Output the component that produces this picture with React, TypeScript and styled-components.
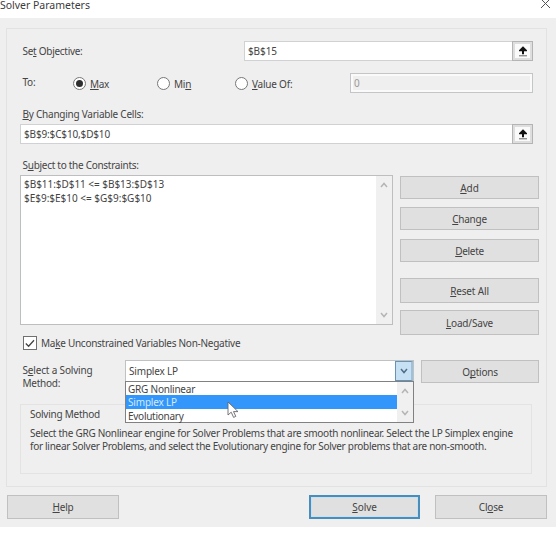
import React from "react";
import styled, { createGlobalStyle } from "styled-components";

const Global = createGlobalStyle`
  * { box-sizing: border-box; }
  body { margin: 0; background: #fff; overflow: hidden; }
`;

const Dialog = styled.main`
  width: 556px;
  height: 527px;
  background: #efefef;
  font: 10px/13px "Noto Sans", "Open Sans", sans-serif;
  color: #444;
`;

const TitleBar = styled.header`
  height: 18px;
  padding-right: 5px;
  display: flex;
  justify-content: space-between;
  background: #fff;
  font-size: 10.5px;
  line-height: 10px;
  color: #3c3c3c;
`;

const Text = styled.span<{ $s?: number }>`
  display: block;
  white-space: pre;
  letter-spacing: ${(p) => p.$s ?? -0.25}px;
`;

const Key = styled.span`
  text-decoration: underline;
  text-decoration-thickness: 1px;
  text-underline-offset: 1px;
  text-decoration-skip-ink: none;
`;

const CloseIcon = styled.svg`
  width: 11px;
  height: 10px;
  margin-top: -1px;
`;

const Group = styled.section`
  margin: 10px 0 0 6px;
  width: 541px;
  height: 459px;
  padding: 12px 0 0 13px;
  border: 1px solid #e2e2e2;
`;

const ObjectiveRow = styled.div`
  height: 20px;
  width: 513px;
  padding-left: 2.5px;
  display: flex;
  justify-content: space-between;
  align-items: center;
`;

const RefBox = styled.div<{ $w: number }>`
  width: ${(p) => p.$w}px;
  height: 20px;
  display: flex;
  justify-content: space-between;
  align-items: center;
  padding-left: 3px;
  background: #fff;
  border: 1px solid #cfd1d2;
`;

const RefButton = styled.button`
  width: 21px;
  height: 20px;
  margin-right: -1px;
  padding: 0;
  display: grid;
  place-items: center;
  background: #fafafa;
  border: 1px solid #b4b4b4;
  box-shadow: inset 0 0 0 2px #dedede;
`;

const ToRow = styled.div`
  height: 20px;
  width: 513px;
  margin-top: 12px;
  padding-left: 2.5px;
  display: grid;
  grid-template-columns: 50px 84px 78px 1fr 183px;
`;

const ToLabel = styled(Text)`
  padding-top: 3px;
`;

const RadioOption = styled.label`
  display: flex;
  gap: 4px;
  padding-top: 4px;
`;

const Radio = styled.span<{ $on?: boolean }>`
  width: 13px;
  height: 13px;
  flex: none;
  display: grid;
  place-items: center;
  margin-right: 0.5px;
  border: 1px solid #777;
  border-radius: 50%;
  background: #fff;
  &::after {
    content: "";
    width: 7px;
    height: 7px;
    border-radius: 50%;
    background: ${(p) => (p.$on ? "#2e2e2e" : "transparent")};
  }
`;

const RadioText = styled(Text)`
  padding-top: 1px;
`;

const ValueBox = styled.div`
  height: 20px;
  padding: 1px 3px;
  border: 1px solid #c3c5c7;
  background: #efefef;
  box-shadow: inset 0 0 0 2px #fafafa;
  line-height: 16px;
  color: #999;
`;

const FieldLabel = styled(Text)`
  margin: 15px 0 3px 2.5px;
`;

const ConstraintArea = styled.div`
  display: flex;
  gap: 7px;
  height: 150px;
`;

const List = styled.div`
  width: 373px;
  height: 150px;
  display: flex;
  justify-content: space-between;
  border: 1px solid #bcbec0;
  background: #fff;
`;

const ListRows = styled.div`
  padding: 2px 0 0 3px;
  line-height: 13.5px;
`;

const ScrollTrack = styled.div<{ $pad: number }>`
  width: 16px;
  display: flex;
  flex-direction: column;
  justify-content: space-between;
  align-items: center;
  padding: ${(p) => p.$pad}px 0;
  background: #f0f0f0;
`;

const Button = styled.button<{ $w?: number; $h: number; $gap?: number; $primary?: boolean }>`
  display: grid;
  place-items: center;
  width: ${(p) => p.$w ?? 139}px;
  height: ${(p) => p.$h}px;
  margin: ${(p) => p.$gap ?? 0}px 0 0;
  padding: 1px 0 0;
  font: inherit;
  color: inherit;
  background: #e0e0e0;
  border: ${(p) => (p.$primary ? "2px solid #4a8cba" : "1px solid #c0c0c0")};
  ${(p) => p.$primary && "box-shadow: inset 0 0 0 1px #c5e2f3;"}
`;

const CheckRow = styled.label`
  height: 14px;
  margin: 11px 0 0 3px;
  display: flex;
  align-items: center;
  gap: 4px;
`;

const CheckBox = styled.span`
  width: 14px;
  height: 14px;
  display: grid;
  place-items: center;
  background: #fff;
  border: 1px solid #707070;
`;

const CheckText = styled(Text)`
  padding-top: 1px;
`;

const MethodRow = styled.div`
  height: 23px;
  margin-top: 10px;
  display: grid;
  grid-template-columns: 105px 288px 118px;
  & > button { margin-left: 8px; }
`;

const MethodLabel = styled.div`
  padding: 4px 0 0 2.5px;
`;

const Select = styled.div`
  position: relative;
  width: 289px;
  height: 22px;
  display: flex;
  justify-content: space-between;
  padding-left: 3px;
  border: 1px solid #bfc1c3;
  background: #fff;
  line-height: 21px;
`;

const SelectArrow = styled.span`
  width: 18px;
  height: 20px;
  display: grid;
  place-items: center;
  background: #c7e1f4;
  border: 1px solid #6794b4;
  border-right: 2px solid #9dc1dc;
`;

const Menu = styled.div`
  position: absolute;
  z-index: 2;
  left: -1px;
  top: 20px;
  width: 289px;
  height: 42px;
  display: flex;
  background: #fff;
  border: 1px solid #818181;
`;

const Options = styled.div`
  flex: 1;
`;

const Option = styled.div<{ $on?: boolean }>`
  height: 13.4px;
  padding-left: 2px;
  line-height: 14px;
  color: ${(p) => (p.$on ? "#d5eaff" : "inherit")};
  background: ${(p) => (p.$on ? "#3296fa" : "transparent")};
`;

const Pointer = styled.svg`
  position: absolute;
  left: 101px;
  top: 19px;
  width: 13px;
  height: 18px;
`;

const MethodInfo = styled.section`
  width: 512px;
  height: 70px;
  margin-top: 21px;
  padding: 3px 0 0 9px;
  border: 1px solid #e3e3e3;
`;

const InfoText = styled.div`
  margin-top: 6px;
`;

const Footer = styled.footer`
  display: flex;
  width: 540px;
  margin: 8px 0 0 7px;
`;

const Gap = styled.span<{ $w: number }>`
  width: ${(p) => p.$w}px;
`;

const Chevron = ({ up, color = "#b5b5b5" }: { up?: boolean; color?: string }) => (
  <svg width="8" height="6" viewBox="0 0 8 6" fill="none" stroke={color} strokeWidth="1.5">
    <path d={up ? "M1 5 L4 1.5 L7 5" : "M1 1 L4 4.5 L7 1"} />
  </svg>
);

const UpArrow = () => (
  <svg width="10" height="11" viewBox="0 0 10 11" fill="#111">
    <path d="M5 0.3 L9 4.3 V5.3 H6 V8.3 H4 V5.3 H1 V4.3 Z" />
    <rect x="1" y="9.3" width="8" height="1" fill="#666" />
  </svg>
);

/** Renders a caption with its access key underlined. */
const Caption = ({ text, k }: { text: string; k: number }) => (
  <>
    {text.slice(0, k)}
    <Key>{text[k]}</Key>
    {text.slice(k + 1)}
  </>
);

export default function App() {
  return (
    <>
      <Global />
      <Dialog>
        <TitleBar>
          <Text $s={-0.02}>Solver Parameters</Text>
          <CloseIcon viewBox="0 0 11 10" stroke="#555" strokeWidth="1" fill="none">
            <path d="M1 0 L10 9 M10 0 L1 9" />
          </CloseIcon>
        </TitleBar>
        <Group>
          <ObjectiveRow>
            <Text $s={-0.28}><Caption text="Set Objective:" k={2} /></Text>
            <RefBox $w={289}>
              <Text $s={-0.1}>$B$15</Text>
              <RefButton><UpArrow /></RefButton>
            </RefBox>
          </ObjectiveRow>
          <ToRow>
            <ToLabel>To:</ToLabel>
            <RadioOption><Radio $on /><RadioText $s={-0.4}><Caption text="Max" k={0} /></RadioText></RadioOption>
            <RadioOption><Radio /><RadioText $s={-0.2}><Caption text="Min" k={2} /></RadioText></RadioOption>
            <RadioOption><Radio /><RadioText $s={-0.22}><Caption text="Value Of:" k={0} /></RadioText></RadioOption>
            <ValueBox>0</ValueBox>
          </ToRow>
          <FieldLabel $s={-0.24}><Caption text="By Changing Variable Cells:" k={0} /></FieldLabel>
          <RefBox $w={513}>
            <Text $s={-0.15}>$B$9:$C$10,$D$10</Text>
            <RefButton><UpArrow /></RefButton>
          </RefBox>
          <FieldLabel $s={-0.28}><Caption text="Subject to the Constraints:" k={1} /></FieldLabel>
          <ConstraintArea>
            <List>
              <ListRows>
                <Text $s={-0.04}>{"$B$11:$D$11 <= $B$13:$D$13"}</Text>
                <Text $s={-0.01}>{"$E$9:$E$10 <= $G$9:$G$10"}</Text>
              </ListRows>
              <ScrollTrack $pad={6}><Chevron up /><Chevron /></ScrollTrack>
            </List>
            <div>
              <Button $h={23} $gap={1}><Text $s={-0.05}><Caption text="Add" k={0} /></Text></Button>
              <Button $h={23} $gap={8}><Text><Caption text="Change" k={0} /></Text></Button>
              <Button $h={23} $gap={9}><Text $s={-0.3}><Caption text="Delete" k={0} /></Text></Button>
              <Button $h={25} $gap={16}><Text $s={-0.16}><Caption text="Reset All" k={0} /></Text></Button>
              <Button $h={25} $gap={7}><Text $s={-0.17}><Caption text="Load/Save" k={0} /></Text></Button>
            </div>
          </ConstraintArea>
          <CheckRow>
            <CheckBox>
              <svg width="10" height="9" viewBox="0 0 10 9" fill="none" stroke="#444" strokeWidth="1.3">
                <path d="M0.8 4.5 L3.6 7.2 L9 1.2" />
              </svg>
            </CheckBox>
            <CheckText $s={-0.27}><Caption text="Make Unconstrained Variables Non-Negative" k={2} /></CheckText>
          </CheckRow>
          <MethodRow>
            <MethodLabel>
              <Text $s={-0.17}><Caption text="Select a Solving" k={1} /></Text>
              <Text $s={-0.25}>Method:</Text>
            </MethodLabel>
            <Select>
              <Text $s={-0.18}>Simplex LP</Text>
              <SelectArrow><Chevron color="#4f6d84" /></SelectArrow>
              <Menu>
                <Options>
                  <Option><Text $s={-0.22}>GRG Nonlinear</Text></Option>
                  <Option $on><Text $s={-0.18}>Simplex LP</Text></Option>
                  <Option><Text $s={-0.27}>Evolutionary</Text></Option>
                </Options>
                <ScrollTrack $pad={6}><Chevron up /><Chevron /></ScrollTrack>
                <Pointer viewBox="0 0 13 18" fill="#fff" stroke="#666" strokeWidth="0.9">
                  <path d="M1 1 V14 L4.2 11.2 L6.6 16.4 L8.8 15.4 L6.5 10.6 H11 Z" />
                </Pointer>
              </Menu>
            </Select>
            <Button $w={118} $h={23}><Text $s={-0.24}><Caption text="Options" k={1} /></Text></Button>
          </MethodRow>
          <MethodInfo>
            <Text $s={-0.25}>Solving Method</Text>
            <InfoText>
              <Text $s={-0.27}>Select the GRG Nonlinear engine for Solver Problems that are smooth nonlinear. Select the LP Simplex engine</Text>
              <Text $s={-0.29}>for linear Solver Problems, and select the Evolutionary engine for Solver problems that are non-smooth.</Text>
            </InfoText>
          </MethodInfo>
        </Group>
        <Footer>
          <Button $w={112} $h={24}><Text $s={-0.2}><Caption text="Help" k={0} /></Text></Button>
          <Gap $w={190} />
          <Button $w={111} $h={24} $primary><Text $s={-0.06}><Caption text="Solve" k={0} /></Text></Button>
          <Gap $w={15} />
          <Button $w={112} $h={24}><Text $s={-0.18}><Caption text="Close" k={2} /></Text></Button>
        </Footer>
      </Dialog>
    </>
  );
}
